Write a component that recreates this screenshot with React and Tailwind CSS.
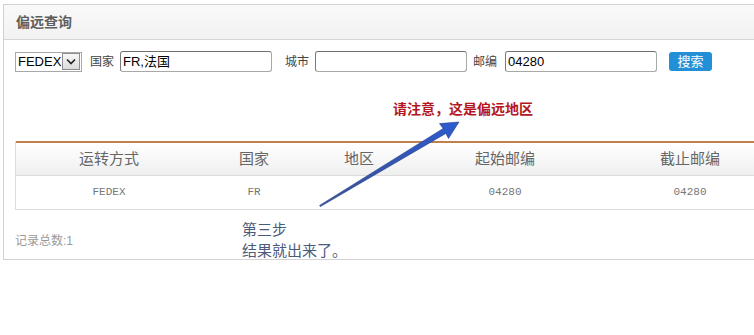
import React from 'react';

const cols = 'grid grid-cols-[186px_104px_106px_186px_184px]';

function Field({ value, width }) {
  return (
    <div
      className={`${width} h-[21px] border border-[#a8a8a8] border-t-[#6f6f6f] border-l-[#7a7a7a] rounded-[3px] bg-white flex items-center px-[2px] text-[13px] text-black`}
    >
      {value}
    </div>
  );
}

export default function App() {
  return (
    <div
      className="relative w-[754px] h-[335px] overflow-hidden bg-white"
      style={{ fontFamily: 'Arial, "Liberation Sans", "Noto Sans CJK SC", sans-serif' }}
    >
      <div className="ml-[3px] mt-[4px] w-[790px] border border-[#d2d2d2]">
        {/* Header */}
        <div className="h-[35px] bg-gradient-to-b from-[#f9f9f9] to-[#f2f2f2] border-b border-[#d6d6d6] flex items-center pl-[12px]">
          <span className="text-[14px] font-bold text-[#5f5f5f]">偏远查询</span>
        </div>

        {/* Search form */}
        <div className="flex items-center pl-[11px] pt-[11px] h-[32px] text-[12px] text-[#444]">
          <div className="w-[67px] h-[20px] border border-[#a8a8a8] bg-white flex items-center justify-between pl-[2px] pr-[1px] text-[13px] text-black">
            <span>FEDEX</span>
            <div className="w-[18px] h-[17px] border border-[#8e8e8e] bg-gradient-to-b from-[#f7f7f7] to-[#dcdcdc] flex items-center justify-center">
              <svg width="10" height="7" viewBox="0 0 10 7">
                <path d="M1 1.5 L5 5.5 L9 1.5" fill="none" stroke="#222" strokeWidth="1.6" />
              </svg>
            </div>
          </div>
          <span className="ml-[8px] mr-[6px]">国家</span>
          <Field value="FR,法国" width="w-[152px]" />
          <span className="ml-[13px] mr-[6px]">城市</span>
          <Field value="" width="w-[152px]" />
          <span className="ml-[6px] mr-[8px]">邮编</span>
          <Field value="04280" width="w-[152px]" />
          <button className="ml-[12px] h-[19px] w-[43px] rounded-[3px] bg-[#2290d6] text-white text-[13px] leading-none flex items-center justify-center">
            搜索
          </button>
        </div>

        {/* Spacer before table */}
        <div className="h-[69px]" />

        {/* Table */}
        <div className="ml-[11px] border-l border-[#dcdcdc]">
          <div className={`${cols} h-[35px] border-t-2 border-[#c0804c] border-b border-b-[#dcdcdc] bg-gradient-to-b from-white to-[#efefef] text-[15px] text-[#666]`}>
            {['运转方式', '国家', '地区', '起始邮编', '截止邮编'].map((h) => (
              <div key={h} className="flex items-center justify-center">{h}</div>
            ))}
          </div>
          <div
            className={`${cols} h-[34px] border-b border-[#dcdcdc] text-[11px] text-[#777]`}
            style={{ fontFamily: '"Liberation Mono", "DejaVu Sans Mono", monospace' }}
          >
            {['FEDEX', 'FR', '', '04280', '04280'].map((d, i) => (
              <div key={i} className="flex items-center justify-center">{d}</div>
            ))}
          </div>
        </div>

        {/* Footer */}
        <div className="h-[49px] pl-[11px] pt-[22px] text-[12px] text-[#9a9a9a]">记录总数:1</div>
      </div>

      {/* Annotations */}
      <div className="absolute left-[393px] top-[99px] text-[14px] font-bold text-[#b3161d] leading-[20px]">
        请注意，这是偏远地区
      </div>
      <div className="absolute left-[242px] top-[219px] text-[15px] text-[#4b5b7a] leading-[21px]">
        <div>第三步</div>
        <div>结果就出来了。</div>
      </div>
      <svg className="absolute left-0 top-0 pointer-events-none" width="754" height="335">
        <defs>
          <linearGradient id="arr" x1="0" y1="1" x2="1" y2="0">
            <stop offset="0" stopColor="#3b4f8f" />
            <stop offset="1" stopColor="#2d5bd0" />
          </linearGradient>
        </defs>
        <polygon
          points="320.4,206.6 445.9,133.4 448.5,138.5 459,122 439.5,123.6 443.1,128.6 319.6,205.4"
          fill="url(#arr)"
          stroke="#27408a"
          strokeWidth="0.6"
          strokeLinejoin="round"
        />
      </svg>
    </div>
  );
}
